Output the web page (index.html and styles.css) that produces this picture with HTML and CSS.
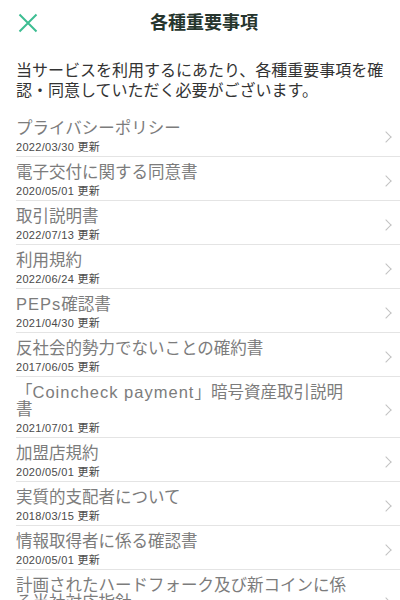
FILE: index.html
```html
<!DOCTYPE html>
<html lang="ja">
	<head>
		<meta charset="utf-8">
		<title>各種重要事項</title>
		<link rel="stylesheet" href="styles.css">
	</head>
	<body>
		<header class="topbar">
			<a class="close" href="#">
				<svg width="20" height="20" viewBox="0 0 20 20">
					<path d="M1.5 1.5 L18.5 18.5 M18.5 1.5 L1.5 18.5" stroke="#3dbd92" stroke-width="2" fill="none"/>
				</svg>
			</a>
			<h1 class="title">各種重要事項</h1>
			<span class="spacer"></span>
		</header>

		<p class="intro">当サービスを利用するにあたり、各種重要事項を確認・同意していただく必要がございます。</p>

		<ul class="docs">
			<li><div class="doc"><div class="name">プライバシーポリシー</div><div class="date">2022/03/30 更新</div></div><span class="chev"></span></li>
			<li><div class="doc"><div class="name">電子交付に関する同意書</div><div class="date">2020/05/01 更新</div></div><span class="chev"></span></li>
			<li><div class="doc"><div class="name">取引説明書</div><div class="date">2022/07/13 更新</div></div><span class="chev"></span></li>
			<li><div class="doc"><div class="name">利用規約</div><div class="date">2022/06/24 更新</div></div><span class="chev"></span></li>
			<li><div class="doc"><div class="name"><span class="en">PEPs</span>確認書</div><div class="date">2021/04/30 更新</div></div><span class="chev"></span></li>
			<li><div class="doc"><div class="name">反社会的勢力でないことの確約書</div><div class="date">2017/06/05 更新</div></div><span class="chev"></span></li>
			<li><div class="doc"><div class="name">「<span class="en">Coincheck payment</span>」暗号資産取引説明書</div><div class="date">2021/07/01 更新</div></div><span class="chev"></span></li>
			<li><div class="doc"><div class="name">加盟店規約</div><div class="date">2020/05/01 更新</div></div><span class="chev"></span></li>
			<li><div class="doc"><div class="name">実質的支配者について</div><div class="date">2018/03/15 更新</div></div><span class="chev"></span></li>
			<li><div class="doc"><div class="name">情報取得者に係る確認書</div><div class="date">2020/05/01 更新</div></div><span class="chev"></span></li>
			<li><div class="doc"><div class="name">計画されたハードフォーク及び新コインに係る当社対応指針</div><div class="date">2018/01/01 更新</div></div><span class="chev"></span></li>
		</ul>
	</body>
</html>
```

FILE: styles.css
```css
html, body {
	height: 100%;
}

body {
	margin: 0;
	padding: 0;
	background: #fff;
	font-family: "Liberation Sans", "Noto Sans CJK JP", sans-serif;
	overflow: hidden;
}

.topbar {
	display: flex;
	align-items: center;
	height: 46px;
}

.close {
	display: flex;
	align-items: center;
	width: 46px;
	height: 46px;
	padding-left: 18px;
	box-sizing: border-box;
}

.close svg {
	display: block;
}

.title {
	flex: 1;
	margin: 0;
	padding-left: 8px;
	text-align: center;
	font-size: 18px;
	font-weight: bold;
	line-height: 46px;
	color: #26352d;
}

.spacer {
	width: 46px;
}

.intro {
	margin: 0;
	padding: 15px 12px 12px 16px;
	font-size: 16px;
	line-height: 20px;
	color: #333;
}

.docs {
	list-style: none;
	margin: 0;
	padding: 0 0 0 16px;
}

.docs li {
	display: flex;
	align-items: center;
	padding: 7px 0 2px;
	border-bottom: 1px solid #e4e4e4;
}

.doc {
	width: 336px;
}

.name {
	font-size: 16.5px;
	line-height: 17px;
	color: #7c7c7c;
}

.name .en {
	letter-spacing: 1px;
}

.date {
	margin-top: 4px;
	font-size: 11px;
	line-height: 13px;
	letter-spacing: 0.3px;
	color: #4a4a4a;
}

.chev {
	margin-left: 30px;
	width: 7px;
	height: 7px;
	border-top: 1.6px solid #c2c2c2;
	border-right: 1.6px solid #c2c2c2;
	transform: rotate(45deg);
}
```
